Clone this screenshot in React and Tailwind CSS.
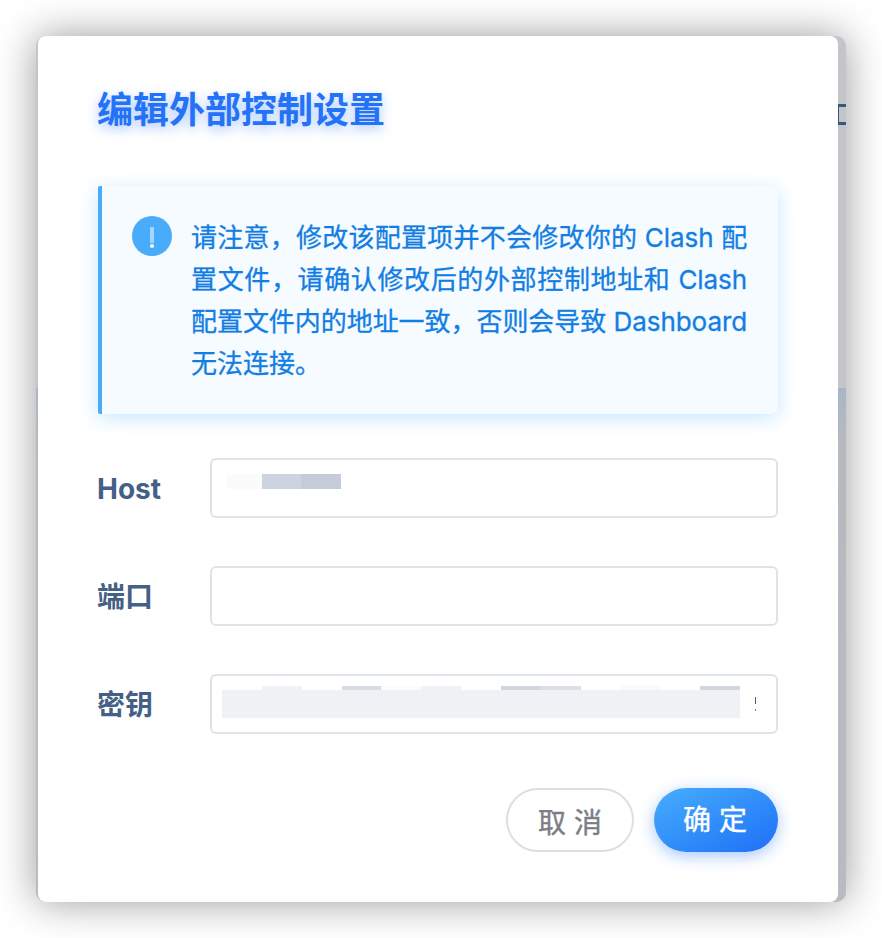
const noticeLines = [
  '请注意，修改该配置项并不会修改你的 Clash 配',
  '置文件，请确认修改后的外部控制地址和 Clash',
  '配置文件内的地址一致，否则会导致 Dashboard',
];

function Field({ label, children }) {
  return (
    <div className="flex h-[60px] items-center">
      <label className="-ml-px w-[113px] shrink-0 pt-px text-[28px] leading-[60px] font-bold text-[#446087]">{label}</label>
      <div className="h-[60px] flex-1 rounded-md border-2 border-[#dde3e9] bg-white">{children}</div>
    </div>
  );
}

function Notice() {
  return (
    <div className="mt-[51px] flex h-[228px] rounded-l-[2px] rounded-r-lg border-l-4 border-[#48acfb] bg-[#f6fbff] pt-[30px] pr-8 pl-[30px] shadow-[0_4px_20px_rgba(44,164,252,0.27)]">
      <div className="flex size-10 shrink-0 flex-col items-center rounded-full bg-[#48acfb] pt-[11px]">
        <span className="h-4 w-1 bg-[#a3d5fd]" />
        <span className="mt-px size-1 rounded-full bg-white" />
      </div>
      <div className="ml-[19px] flex-1 pt-px text-[26px] leading-[42px] text-[#127ee4] [-webkit-text-stroke:0.3px_#127ee4]">
        {noticeLines.map((line) => (
          <p key={line} className="h-[42px] whitespace-nowrap tracking-[-0.05px] [text-align-last:justify]">{line}</p>
        ))}
        <p className="h-[42px]">无法连接。</p>
      </div>
    </div>
  );
}

export default function App() {
  return (
    <div className="h-[938px] w-[882px] overflow-hidden bg-white p-9 font-['Inter','Noto_Sans_CJK_SC',sans-serif]" lang="zh-CN">
      <div className="relative flex h-[866px] w-[810px] flex-col rounded-[10px] bg-[#c3c5ca] shadow-[0_0_40px_rgba(0,0,0,0.4)]">
        <div className="absolute inset-x-0 top-[352px] bottom-0 rounded-b-[10px] bg-linear-to-b from-[#a8b5c9] from-0% via-[#b6babf] via-10% to-[#b8bbc2]" />
        <div className="absolute top-[68px] right-0 h-[21px] w-[9px] border-y-[3px] border-l-2 border-[#3a5679]" />
        <main className="relative ml-0.5 flex h-[866px] w-[800px] flex-col rounded-lg bg-white px-[60px] pt-[49px]">
          <h1 className="-ml-px h-[50px] text-[36px] leading-[50px] font-bold text-[#2472f7] [text-shadow:0_4px_12px_rgba(36,114,247,0.4)]">编辑外部控制设置</h1>
          <Notice />
          <div className="mt-11 flex flex-col gap-12">
            <Field label="Host">
              <div className="flex pt-3.5 pl-[15px]">
                <span className="h-[15px] w-[35px] bg-[#fbfbfc]" />
                <span className="h-[15px] w-[39px] bg-[#cdd4e0]" />
                <span className="h-[15px] w-10 bg-[#c3ccd8]" />
              </div>
            </Field>
            <Field label="端口" />
            <Field label="密钥">
              <div className="flex pt-2.5 pl-2.5">
                <div className="w-[518px]">
                  <div className="flex h-1">
                    <span className="ml-10 w-10 bg-[#f0f2f5]" />
                    <span className="ml-10 w-[39px] bg-[#d5dce4]" />
                    <span className="w-10 bg-[#fbfcfc]" />
                    <span className="w-10 bg-[#eff1f4]" />
                    <span className="ml-10 w-10 bg-[#ced6df]" />
                    <span className="w-10 bg-[#dce0e6]" />
                    <span className="ml-10 w-10 bg-[#f9fafa]" />
                    <span className="ml-[39px] w-10 bg-[#d0d7e0]" />
                  </div>
                  <div className="h-7 bg-[#eff1f5]" />
                </div>
                <div className="ml-3.5 flex w-0.5 flex-col items-end pt-[11px]">
                  <span className="h-[7px] w-px bg-[#446087]" />
                  <span className="mt-[5px] h-0.5 w-px bg-[#71849e]" />
                </div>
              </div>
            </Field>
          </div>
          <div className="mt-[54px] flex justify-end gap-5">
            <button className="h-16 w-32 rounded-full border-2 border-[#dedfe1] pt-1.5 text-[28px] leading-[54px] text-[#7c7e85] [-webkit-text-stroke:0.4px_#7c7e85]">取 消</button>
            <button className="h-16 w-[124px] rounded-full bg-linear-to-br from-[#48adfc] to-[#216ef7] pt-px pr-0.5 text-[28px] leading-[63px] text-white shadow-[0_4px_16px_rgba(36,114,247,0.4)] [-webkit-text-stroke:0.4px_#ffffff]">确 定</button>
          </div>
        </main>
      </div>
    </div>
  );
}
